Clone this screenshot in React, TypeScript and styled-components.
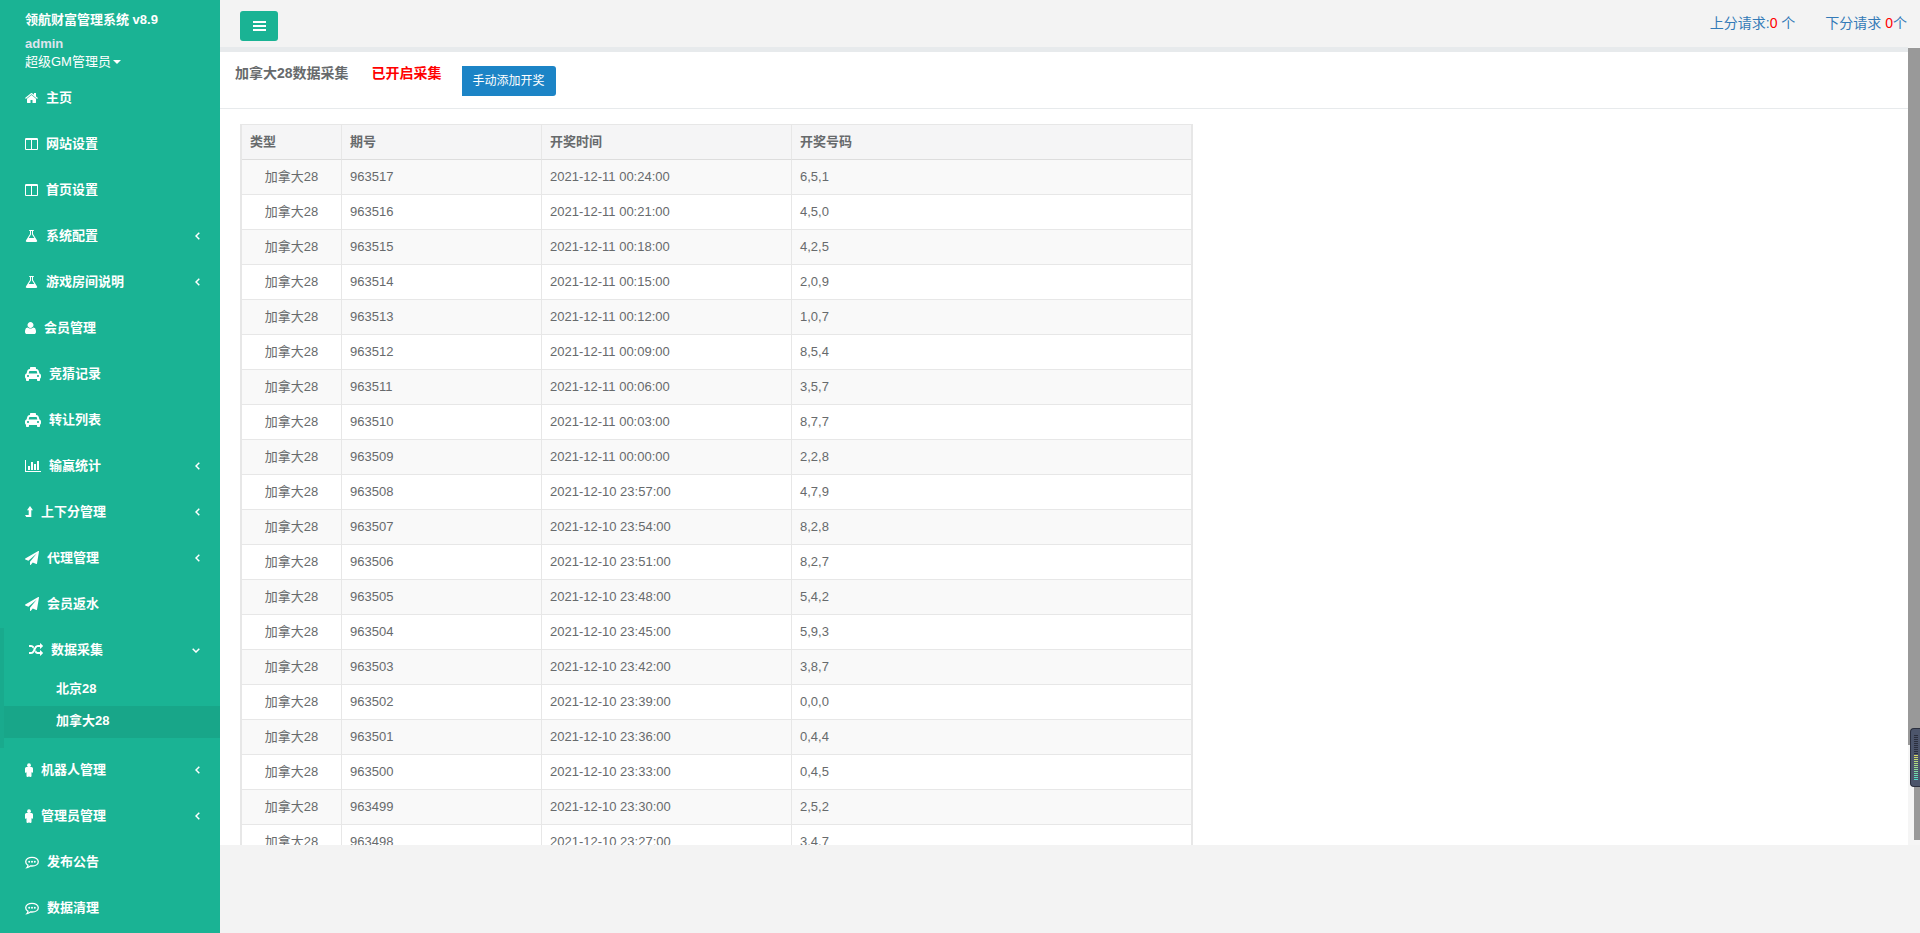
import React from "react";
import styled, { createGlobalStyle } from "styled-components";
import { FaTaxi } from "react-icons/fa";

const GlobalStyle = createGlobalStyle`
  * { box-sizing: border-box; }
  body {
    margin: 0;
    background: #f3f3f3;
    color: #676a6c;
    font: 13px/18px "Liberation Sans", "Noto Sans CJK SC", sans-serif;
    overflow: hidden;
  }
  a { text-decoration: none; }
  ul { list-style: none; margin: 0; padding: 0; }
`;

const Shell = styled.div`
  display: flex;
  height: 100vh;
`;

const Sidebar = styled.nav`
  flex: 0 0 220px;
  background: #1ab394;
  color: #fff;
  overflow: hidden;
`;

const Profile = styled.header`
  height: 76px;
  padding: 11px 25px 0;
`;

const SystemName = styled.strong`
  display: block;
  margin-bottom: 6px;
`;

const UserName = styled.strong`
  display: block;
  color: #dfe4ed;
`;

const RoleButton = styled.button`
  display: flex;
  align-items: center;
  gap: 2px;
  padding: 0;
  border: 0;
  background: none;
  color: #fff;
  font: inherit;
`;

const Caret = styled.span`
  border: 4px solid transparent;
  border-top-color: #fff;
  border-bottom: 0;
`;

const NavItem = styled.li<{ $active?: boolean }>`
  ${(p) => p.$active && "border-left: 4px solid #19aa8d; padding-bottom: 10px;"}
`;

const NavLink = styled.a`
  display: flex;
  align-items: center;
  gap: 8px;
  height: 46px;
  padding: 0 20px 2px 25px;
  color: #fff;
  font-weight: 700;

  svg { flex: none; }
`;

const Arrow = styled.svg`
  margin-left: auto;
  fill: none;
  stroke: #fff;
  stroke-width: 1.5;
`;

const SubLink = styled.a<{ $current?: boolean }>`
  display: block;
  height: 32px;
  padding: 6px 52px;
  color: #fff;
  font-weight: 700;
  background: ${(p) => (p.$current ? "#18a689" : "transparent")};
`;

const Main = styled.div`
  flex: 1;
  min-width: 0;
  display: flex;
  flex-direction: column;
`;

const TopBar = styled.header`
  flex: none;
  display: flex;
  justify-content: space-between;
  height: 47px;
  padding: 11px 13px 0 20px;
`;

const MenuButton = styled.button`
  display: grid;
  place-items: center;
  width: 38px;
  height: 30px;
  padding: 0;
  border: 0;
  border-radius: 3px;
  background: #1ab394;
`;

const Requests = styled.div`
  display: flex;
  gap: 30px;
  padding-top: 2px;
  font-size: 14px;
  line-height: 20px;

  a { color: #337ab7; }
`;

const Count = styled.span`
  color: #f00;
`;

const Workspace = styled.div`
  position: relative;
  flex: none;
  display: flex;
  height: calc(100vh - 135px);
`;

const Panel = styled.main`
  flex: 1;
  min-width: 0;
  border-top: 5px solid #e7eaec;
  background: #fff;
  overflow: hidden;
`;

const PanelTitle = styled.div`
  display: flex;
  align-items: flex-start;
  gap: 20px;
  height: 57px;
  padding: 14px 15px 0;
  border-bottom: 1px solid #e7eaec;
`;

const Heading = styled.h1<{ $alert?: boolean }>`
  margin: -3px 0 0;
  padding-left: ${(p) => (p.$alert ? "3px" : "0")};
  font-size: 14px;
  line-height: 20px;
  color: ${(p) => (p.$alert ? "#f00" : "inherit")};
`;

const AddButton = styled.button`
  height: 30px;
  padding: 0 11px;
  border: 0;
  border-radius: 0 3px 3px 0;
  background: #1c84c6;
  color: #fff;
  font: inherit;
  font-size: 12px;
`;

const DataTable = styled.table`
  width: 953px;
  max-width: calc(100% - 40px);
  margin: 15px 20px;
  table-layout: fixed;
  border-collapse: separate;
  border-spacing: 0;
  border: solid #e7e7e7;
  border-width: 1px 1px 1px 2px;

  th, td {
    height: 35px;
    padding: 0 8px 1px;
    border-right: 1px solid #e7e7e7;
    border-bottom: 1px solid #e7e7e7;
    text-align: left;
  }
  th {
    background: #f5f5f6;
    border-bottom-color: #ddd;
  }
  td:first-child { text-align: center; }
  tbody tr:nth-child(odd) { background: #f9f9f9; }
`;

const ScrollTrack = styled.div`
  flex: 0 0 12px;
  padding-top: 1px;
  background: #f5f5f5;
  display: flex;
  flex-direction: column;
  align-items: flex-end;
`;

const OuterThumb = styled.div`
  flex: 697;
  width: 12px;
  background: #999;
`;

const InnerThumb = styled.div`
  flex: 95;
  width: 6px;
  margin-bottom: 5px;
  background: #999;
`;

const Meter = styled.div`
  position: absolute;
  right: 0;
  bottom: 58px;
  width: 10px;
  height: 59px;
  padding: 6px 2px 0 3px;
  border: 1px solid #2b2f3e;
  border-right: 0;
  border-radius: 4px 0 0 4px;
  background: #4c556b;
`;

const MeterBar = styled.div<{ $color: string }>`
  height: 1px;
  margin-bottom: 1px;
  background: ${(p) => p.$color};
`;

type IconName =
  | "home" | "columns" | "flask" | "user" | "taxi" | "chart"
  | "levelUp" | "plane" | "random" | "male" | "comment";

const paths: Record<string, { x: number; w: number; d: string }> = {
  home: { x: 64, w: 13, d: "M1472 992v480q0 26-19 45t-45 19h-384v-384h-256v384h-384q-26 0-45-19t-19-45v-480q0-1 .5-3t.5-3l575-474 575 474q1 2 1 6zm223-69l-62 74q-8 9-21 11h-3q-13 0-21-7l-692-577-692 577q-12 8-24 7-13-2-21-11l-62-74q-8-10-7-23.5t11-21.5l719-599q32-26 76-26t76 26l244 204v-195q0-14 9-23t23-9h192q14 0 23 9t9 23v408l219 182q10 8 11 21.5t-7 23.5z" },
  columns: { x: 64, w: 13, d: "M224 1536h608v-1152h-640v1120q0 13 9.5 22.5t22.5 9.5zm1376-32v-1120h-640v1152h608q13 0 22.5-9.5t9.5-22.5zm128-1216v1216q0 66-47 113t-113 47h-1344q-66 0-113-47t-47-113v-1216q0-66 47-113t113-47h1344q66 0 113 47t47 113z" },
  flask: { x: 64, w: 13, d: "M1591 1448q56 89 21.5 152.5t-140.5 63.5h-1152q-106 0-140.5-63.5t21.5-152.5l503-793v-399h-64q-26 0-45-19t-19-45 19-45 45-19h512q26 0 45 19t19 45-19 45-45 19h-64v399zm-779-725l-272 429h712l-272-429-20-31v-436h-128v436z" },
  user: { x: 192, w: 11, d: "M1600 1405q0 120-73 189.5t-194 69.5h-874q-121 0-194-69.5t-73-189.5q0-53 3.500-103.500t14-109 26.500-108.500 43-97.500 62-81 85.500-53.500 111.500-20q9 0 42 21.500t74.500 48 108 48 133.500 21.500 133.500-21.500 108-48 74.500-48 42-21.500q61 0 111.500 20t85.500 53.500 62 81 43 97.500 26.500 108.500 14 109 3.500 103.500zm-320-893q0 159-112.500 271.500t-271.500 112.500-271.500-112.500-112.500-271.500 112.500-271.500 271.500-112.500 271.500 112.500 112.500 271.500z" },
  chart: { x: 0, w: 16, d: "M640 896v512h-256v-512h256zm384-512v1024h-256v-1024h256zm1024 1152v128h-2048v-1536h128v1408h1920zm-640-896v768h-256v-768h256zm384-384v1152h-256v-1152h256z" },
  plane: { x: 0, w: 14, d: "M1764 11q33 24 27 64l-256 1536q-5 29-32 45-14 8-31 8-11 0-24-5l-453-185-242 295q-18 23-49 23-13 0-22-4-19-7-30.5-23.500t-11.500-36.500v-349l864-1059-1069 925-395-162q-37-14-40-55-2-40 32-59l1664-960q15-9 32-9 20 0 36 11z" },
  random: { x: 0, w: 14, d: "M666 481q-60 92-137 273-22-45-37-72.5t-40.5-63.5-51-56.5-63-35-81.5-14.5h-224q-14 0-23-9t-9-23v-192q0-14 9-23t23-9h224q250 0 410 225zm1126 799q0 14-9 23l-320 320q-9 9-23 9-13 0-22.5-9.5t-9.5-22.5v-192q-32 0-85 .5t-81 1-73-1-71-5-64-10.5-63-18.5-58-28.5-59-40-55-53.5-56-69.5q59-93 136-273 22 45 37 72.5t40.5 63.5 51 56.5 63 35 81.5 14.5h256v-192q0-14 9-23t23-9q12 0 24 10l319 319q9 9 9 23zm0-896q0 14-9 23l-320 320q-9 9-23 9-13 0-22.5-9.5t-9.5-22.5v-192h-256q-48 0-87 15t-69 45-51 61.5-45 77.5q-32 62-78 171-29 66-49.5 111t-54 105-64 100-74 83-90 68.5-106.5 42-128 16.5h-224q-14 0-23-9t-9-23v-192q0-14 9-23t23-9h224q48 0 87-15t69-45 51-61.5 45-77.5q32-62 78-171 29-66 49.5-111t54-105 64-100 74-83 90-68.5 106.5-42 128-16.5h256v-192q0-14 9-23t23-9q12 0 24 10l319 319q9 9 9 23z" },
};

function Icon({ name }: { name: IconName }) {
  if (name === "taxi") return <FaTaxi size={16} />;
  if (name === "levelUp")
    return (
      <svg width="8" height="12" viewBox="0 0 8 12" fill="#fff">
        <path d="M5 0l3 4.200H6.300V11H1.300L0 9h3.700V4.200H2z" />
      </svg>
    );
  if (name === "male")
    return (
      <svg width="8" height="14" viewBox="0 0 8 14" fill="#fff">
        <circle cx="4" cy="2.200" r="1.900" />
        <path d="M1.500 4h5Q8 4 8 5.500v3.300q0 .9-.7.9t-.8-.9V13q0 1-1.100 1T4 13.200q-.3.8-1.400.8t-1.100-1V8.800q0 .9-.8.9T0 8.800V5.500Q0 4 1.500 4z" />
      </svg>
    );
  if (name === "comment")
    return (
      <svg width="14" height="14" viewBox="0 0 14 14" fill="#fff">
        <path d="M7 2.300c3.500 0 6.300 1.900 6.300 4.400S10.500 11 7 11q-.8 0-1.600-.1-1.300 1.300-3.400 1.700.9-1 1-2.400C1.600 9.400.7 8.200.7 6.700.7 4.200 3.500 2.300 7 2.300z" fill="none" stroke="#fff" strokeWidth="1.300" />
        <circle cx="4.200" cy="6.700" r="1" />
        <circle cx="7" cy="6.700" r="1" />
        <circle cx="9.800" cy="6.700" r="1" />
      </svg>
    );
  const { x, w, d } = paths[name];
  return (
    <svg width={w} height="14" viewBox={`${x} 0 ${w * 128} 1792`} fill="#fff">
      <path d={d} />
    </svg>
  );
}

interface Entry {
  icon: IconName;
  label: string;
  more?: boolean;
  children?: string[];
}

const entries: Entry[] = [
  { icon: "home", label: "主页" },
  { icon: "columns", label: "网站设置" },
  { icon: "columns", label: "首页设置" },
  { icon: "flask", label: "系统配置", more: true },
  { icon: "flask", label: "游戏房间说明", more: true },
  { icon: "user", label: "会员管理" },
  { icon: "taxi", label: "竞猜记录" },
  { icon: "taxi", label: "转让列表" },
  { icon: "chart", label: "输赢统计", more: true },
  { icon: "levelUp", label: "上下分管理", more: true },
  { icon: "plane", label: "代理管理", more: true },
  { icon: "plane", label: "会员返水" },
  { icon: "random", label: "数据采集", children: ["北京28", "加拿大28"] },
  { icon: "male", label: "机器人管理", more: true },
  { icon: "male", label: "管理员管理", more: true },
  { icon: "comment", label: "发布公告" },
  { icon: "comment", label: "数据清理" },
];

const draws: [string, string, string][] = [
  ["963517", "2021-12-11 00:24:00", "6,5,1"],
  ["963516", "2021-12-11 00:21:00", "4,5,0"],
  ["963515", "2021-12-11 00:18:00", "4,2,5"],
  ["963514", "2021-12-11 00:15:00", "2,0,9"],
  ["963513", "2021-12-11 00:12:00", "1,0,7"],
  ["963512", "2021-12-11 00:09:00", "8,5,4"],
  ["963511", "2021-12-11 00:06:00", "3,5,7"],
  ["963510", "2021-12-11 00:03:00", "8,7,7"],
  ["963509", "2021-12-11 00:00:00", "2,2,8"],
  ["963508", "2021-12-10 23:57:00", "4,7,9"],
  ["963507", "2021-12-10 23:54:00", "8,2,8"],
  ["963506", "2021-12-10 23:51:00", "8,2,7"],
  ["963505", "2021-12-10 23:48:00", "5,4,2"],
  ["963504", "2021-12-10 23:45:00", "5,9,3"],
  ["963503", "2021-12-10 23:42:00", "3,8,7"],
  ["963502", "2021-12-10 23:39:00", "0,0,0"],
  ["963501", "2021-12-10 23:36:00", "0,4,4"],
  ["963500", "2021-12-10 23:33:00", "0,4,5"],
  ["963499", "2021-12-10 23:30:00", "2,5,2"],
  ["963498", "2021-12-10 23:27:00", "3,4,7"],
];

const meterColors = [
  ...Array(10).fill("#2b2f3e"),
  "#d8d860", "#d0d868", "#c4dc70", "#b8dc78", "#b0dc80", "#a4dc88", "#98dc90",
  "#8cdc98", "#80dca0", "#74dca8", "#68dcb0", "#5cdcbc", "#50dcc8",
];

export default function App() {
  return (
    <Shell>
      <GlobalStyle />
      <Sidebar>
        <Profile>
          <SystemName>领航财富管理系统 v8.9</SystemName>
          <UserName>admin</UserName>
          <RoleButton type="button">超级GM管理员<Caret /></RoleButton>
        </Profile>
        <ul>
          {entries.map((e) => (
            <NavItem key={e.label} $active={!!e.children}>
              <NavLink href="#">
                <Icon name={e.icon} />
                {e.label}
                {e.more && (
                  <Arrow width="5" height="8" viewBox="0 0 5 8"><path d="M4.300.7L1 4l3.300 3.300" /></Arrow>
                )}
                {e.children && (
                  <Arrow width="8" height="5" viewBox="0 0 8 5"><path d="M.7.700L4 4 7.300.7" /></Arrow>
                )}
              </NavLink>
              {e.children && (
                <ul>
                  {e.children.map((c) => (
                    <li key={c}><SubLink href="#" $current={c === "加拿大28"}>{c}</SubLink></li>
                  ))}
                </ul>
              )}
            </NavItem>
          ))}
        </ul>
      </Sidebar>
      <Main>
        <TopBar>
          <MenuButton type="button" aria-label="菜单">
            <svg width="13" height="10" viewBox="0 0 13 10" fill="#fff">
              <path d="M0 0h13v2H0zM0 4h13v2H0zM0 8h13v2H0z" />
            </svg>
          </MenuButton>
          <Requests>
            <a href="#">上分请求:<Count>0</Count> 个</a>
            <a href="#">下分请求 <Count>0</Count>个</a>
          </Requests>
        </TopBar>
        <Workspace>
          <Panel>
            <PanelTitle>
              <Heading>加拿大28数据采集</Heading>
              <Heading as="h2" $alert>已开启采集</Heading>
              <AddButton type="button">手动添加开奖</AddButton>
            </PanelTitle>
            <DataTable>
              <colgroup>
                <col style={{ width: 100 }} />
                <col style={{ width: 200 }} />
                <col style={{ width: 250 }} />
                <col />
              </colgroup>
              <thead>
                <tr><th>类型</th><th>期号</th><th>开奖时间</th><th>开奖号码</th></tr>
              </thead>
              <tbody>
                {draws.map(([issue, time, numbers]) => (
                  <tr key={issue}><td>加拿大28</td><td>{issue}</td><td>{time}</td><td>{numbers}</td></tr>
                ))}
              </tbody>
            </DataTable>
          </Panel>
          <ScrollTrack>
            <OuterThumb />
            <InnerThumb />
          </ScrollTrack>
          <Meter>
            {meterColors.map((c, i) => <MeterBar key={i} $color={c} />)}
          </Meter>
        </Workspace>
      </Main>
    </Shell>
  );
}
